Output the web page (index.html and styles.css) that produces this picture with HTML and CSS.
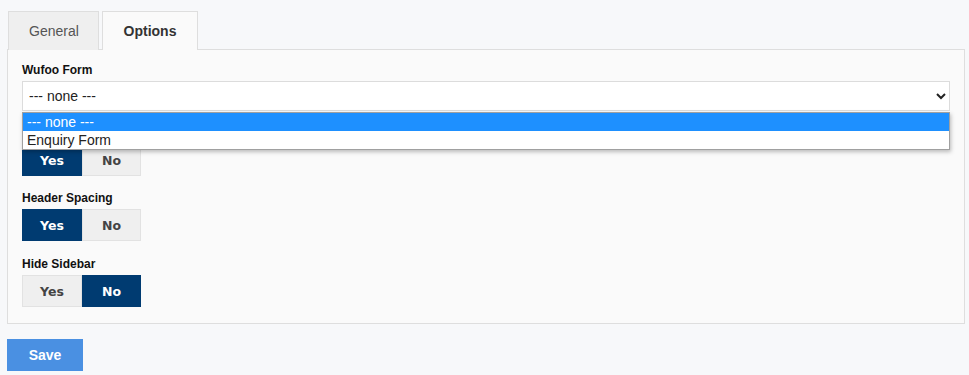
FILE: index.html
```html
<!DOCTYPE html>
<html lang="en">
<head>
  <meta charset="UTF-8">
  <meta name="viewport" content="width=device-width, initial-scale=1.0">
  <title>Options</title>
  <link rel="stylesheet" href="styles.css">
</head>
<body>
  <div class="wrap">
    <div class="tabs">
      <div class="tab">General</div>
      <div class="tab active">Options</div>
    </div>

    <div class="panel">
      <div class="field">
        <label for="wufooForm">Wufoo Form</label>
        <div class="select-box">
          <select id="wufooForm">
            <option>--- none ---</option>
            <option>Enquiry Form</option>
          </select>
          <ul class="dropdown">
            <li class="selected">--- none ---</li>
            <li>Enquiry Form</li>
          </ul>
        </div>
      </div>

      <!-- label of this one sits under the open dropdown -->
      <div class="field">
        <label class="covered" aria-label="Show Title"></label>
        <div class="toggle">
          <button class="on">Yes</button>
          <button>No</button>
        </div>
      </div>

      <div class="field wide">
        <label>Header Spacing</label>
        <div class="toggle">
          <button class="on">Yes</button>
          <button>No</button>
        </div>
      </div>

      <div class="field">
        <label>Hide Sidebar</label>
        <div class="toggle">
          <button>Yes</button>
          <button class="on">No</button>
        </div>
      </div>
    </div>

    <button class="save">Save</button>
  </div>
</body>
</html>
```

FILE: styles.css
```css
* {
  margin: 0;
  padding: 0;
  box-sizing: border-box;
}

body {
  font-family: 'Liberation Sans', Arial, sans-serif;
  background: #f7f8fa;
  color: #222;
}

.wrap {
  padding: 11px 4px 0 7px;
}

.tabs {
  display: flex;
  gap: 3px;
  padding-left: 1px;
  margin-bottom: -1px;
}

.tab {
  height: 39px;
  padding: 0 20px;
  width: 91px;
  border: 1px solid #dedede;
  border-bottom: none;
  background: #efefef;
  color: #555;
  font-size: 14px;
  line-height: 38px;
  text-align: center;
}

.tab.active {
  width: 96px;
  background: #fafafa;
  color: #333;
  font-weight: bold;
  position: relative;
  z-index: 1;
}

.panel {
  background: #fafafa;
  border: 1px solid #dedede;
  padding: 12px 14px 2px 14px;
}

.field {
  margin-bottom: 14px;
}

.field.wide {
  margin-bottom: 15px;
}

.field label {
  display: block;
  height: 16px;
  font-size: 12px;
  font-weight: bold;
  line-height: 16px;
  margin-bottom: 3px;
  color: #111;
}

.select-box {
  position: relative;
}

select {
  display: block;
  width: 100%;
  height: 30px;
  padding: 0 2px;
  border: 1px solid #dcdcdc;
  border-radius: 0;
  background: #fff;
  font-family: 'Liberation Sans', Arial, sans-serif;
  font-size: 14px;
  color: #222;
  outline: none;
}

.dropdown {
  position: absolute;
  top: 31px;
  left: 0;
  right: 0;
  z-index: 5;
  list-style: none;
  background: #fff;
  border: 1px solid #a0a0a0;
  box-shadow: 1px 2px 4px rgba(0, 0, 0, 0.25);
}

.dropdown li {
  height: 18px;
  padding-left: 4px;
  font-size: 14px;
  line-height: 18px;
  color: #222;
}

.dropdown li.selected {
  background: #1e90ff;
  color: #fff;
}

.toggle {
  display: flex;
}

.toggle button {
  width: 59px;
  height: 32px;
  border: 1px solid #e2e2e2;
  background: #efefef;
  color: #444;
  font-family: 'DejaVu Sans', Verdana, sans-serif;
  font-size: 12.5px;
  font-weight: bold;
  cursor: pointer;
}

.toggle button:first-child {
  width: 60px;
}

.toggle button.on {
  background: #003b71;
  border-color: #003b71;
  color: #fff;
}

.save {
  margin-top: 15px;
  width: 76px;
  height: 32px;
  border: none;
  background: #4a90e2;
  color: #fff;
  font-family: 'Liberation Sans', Arial, sans-serif;
  font-size: 14px;
  font-weight: bold;
  cursor: pointer;
}
```
